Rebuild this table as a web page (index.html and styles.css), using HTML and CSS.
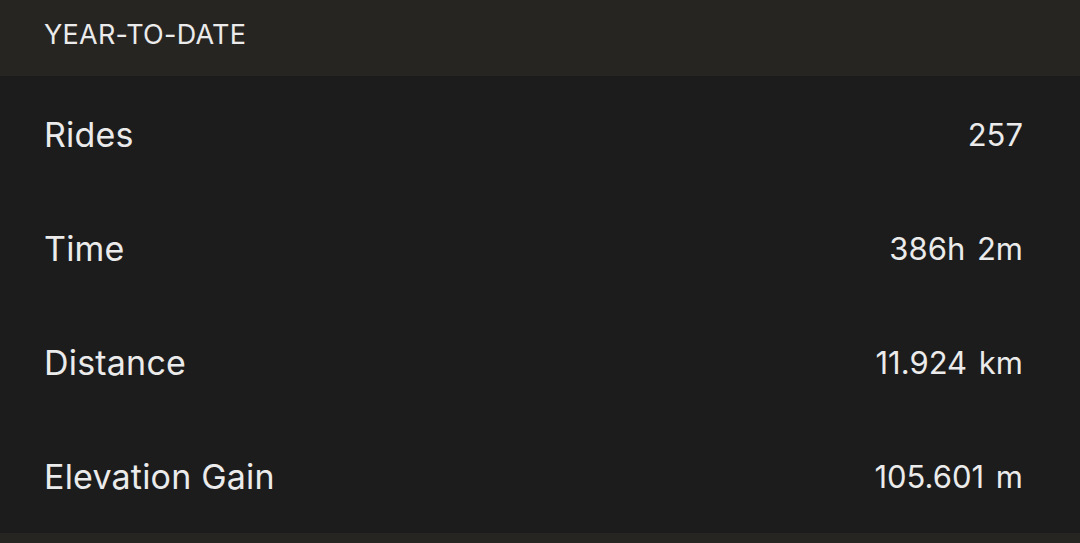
FILE: index.html
```html
<!DOCTYPE html>
<html>
<head>
<meta charset="utf-8">
<link rel="stylesheet" href="styles.css">
</head>
<body>
<section class="stats">
  <header class="stats-header">YEAR-TO-DATE</header>
  <div class="stats-list">
    <div class="stat-row"><span class="stat-label">Rides</span><span class="stat-value">257</span></div>
    <div class="stat-row"><span class="stat-label">Time</span><span class="stat-value">386h 2m</span></div>
    <div class="stat-row"><span class="stat-label">Distance</span><span class="stat-value">11.924 km</span></div>
    <div class="stat-row"><span class="stat-label">Elevation Gain</span><span class="stat-value">105.601 m</span></div>
  </div>
  <div class="stats-footer"></div>
</section>
</body>
</html>
```

FILE: styles.css
```css
html, body {
  margin: 0;
  padding: 0;
  background: #1c1c1c;
}
body {
  font-family: Inter, "Liberation Sans", sans-serif;
  color: #ebebeb;
}
.stats {
  display: flex;
  flex-direction: column;
  height: 543px;
}
.stats-header {
  height: 76px;
  box-sizing: border-box;
  background: #262522;
  padding: 0 45px 8px 44px;
  display: flex;
  align-items: center;
  font-size: 27px;
  font-weight: 400;
  letter-spacing: 0.25px;
}
.stats-list {
  display: flex;
  flex-direction: column;
  background: #1c1c1c;
}
.stat-row {
  height: 114px;
  box-sizing: border-box;
  display: flex;
  justify-content: space-between;
  align-items: center;
  padding: 2px 57px 0 44px;
  font-size: 34px;
}
.stat-label {
  letter-spacing: 0.2px;
}
.stat-value {
  font-size: 31px;
  word-spacing: 3px;
}
.stats-footer {
  flex: 1;
  margin-top: 1px;
  background: #262522;
}
```
